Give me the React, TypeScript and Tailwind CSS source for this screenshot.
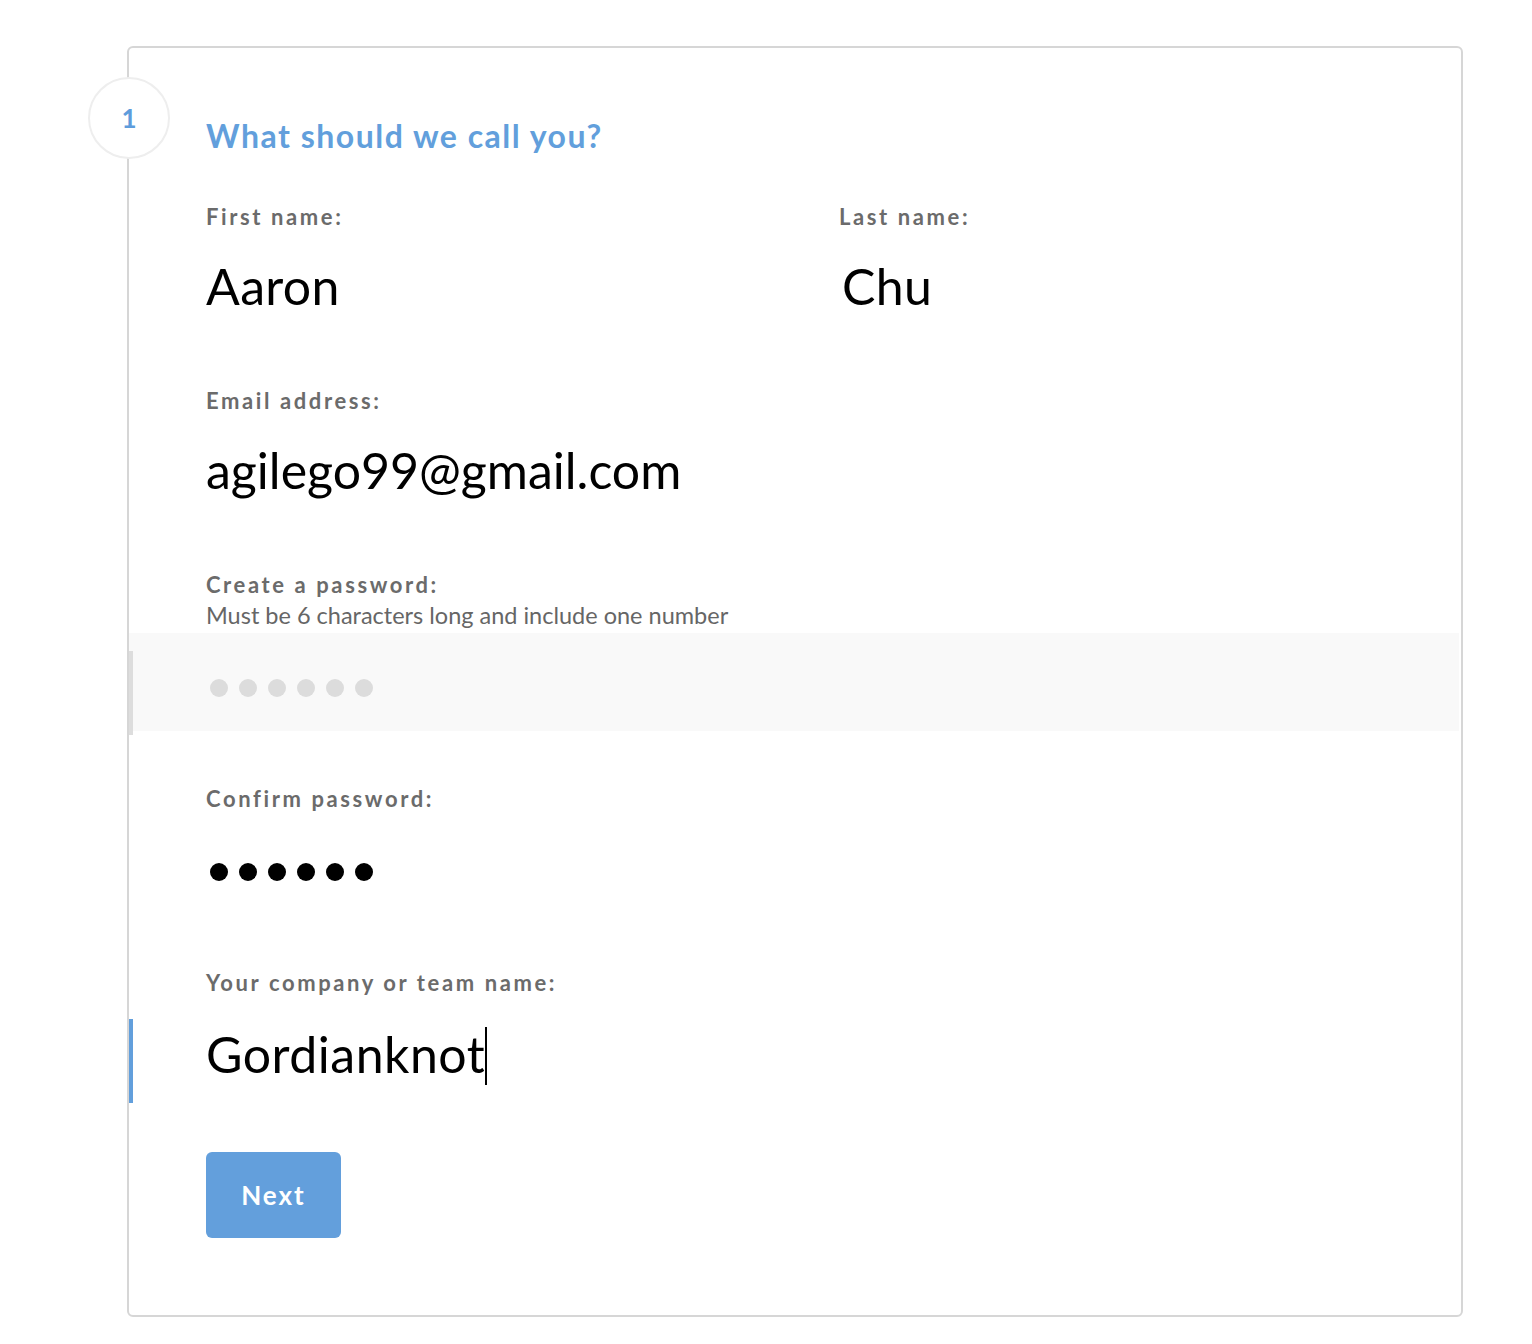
import React from "react";

const font = { fontFamily: "Lato, 'Noto Sans', sans-serif" };

function Label({ children }: { children: React.ReactNode }) {
  return (
    <div className="h-[24px] text-[22px] leading-[24px] font-bold tracking-[2.6px] text-[#6b6b6b]">
      {children}
    </div>
  );
}

function Dots({ color }: { color: string }) {
  return (
    <div className="flex gap-[11px] pl-[4px]">
      {[0, 1, 2, 3, 4, 5].map((i) => (
        <span key={i} className={`block h-[18px] w-[18px] rounded-full ${color}`} />
      ))}
    </div>
  );
}

export default function App() {
  return (
    <div className="min-h-[1344px] bg-white pt-[46px] pl-[127px]" style={font}>
      <div className="relative w-[1336px] h-[1271px] rounded-[6px] border-2 border-[#d6d6d6] bg-white pt-[68px]">
        <div className="absolute left-[-41px] top-[29px] flex h-[82px] w-[82px] items-center justify-center rounded-full border-2 border-[#eeeeee] bg-white text-[26px] font-bold text-[#5e9cdc]">
          1
        </div>

        <div className="pl-[77px] h-[40px] text-[32px] leading-[40px] font-bold tracking-[1.5px] text-[#629fdc]">
          What should we call you?
        </div>

        <div className="mt-[49px] grid grid-cols-[633px_1fr] pl-[77px]">
          <div>
            <Label>First name:</Label>
            <div className="mt-[24px] h-[84px] pt-[8px] text-[50px] leading-none tracking-[0.3px] text-black">Aaron</div>
          </div>
          <div>
            <Label>Last name:</Label>
            <div className="mt-[24px] h-[84px] pt-[8px] pl-[3px] text-[50px] leading-none tracking-[0.3px] text-black">Chu</div>
          </div>
        </div>

        <div className="mt-[52px] pl-[77px]">
          <Label>Email address:</Label>
          <div className="mt-[24px] h-[84px] pt-[8px] text-[50px] leading-none text-black">
            agilego99@gmail.com
          </div>
        </div>

        <div className="mt-[52px] pl-[77px]">
          <Label>Create a password:</Label>
          <div className="mt-[6px] h-[24px] text-[23.5px] leading-[24px] text-[#666666]">
            Must be 6 characters long and include one number
          </div>
        </div>
        <div className="relative mt-[6px] h-[98px] mr-[2px] bg-[#f9f9f9] pl-[77px] pt-[46px]">
          <div className="absolute left-0 top-[18px] h-[84px] w-[4px] bg-[#dddddd]" />
          <Dots color="bg-[#dcdcdc]" />
        </div>

        <div className="mt-[56px] pl-[77px]">
          <Label>Confirm password:</Label>
          <div className="mt-[24px] h-[84px] pt-[28px]">
            <Dots color="bg-black" />
          </div>
        </div>

        <div className="relative mt-[52px]">
          <div className="pl-[77px]">
            <Label>Your company or team name:</Label>
          </div>
          <div className="relative mt-[24px] h-[84px] pl-[77px] pt-[8px]">
            <div className="absolute left-0 top-0 h-[84px] w-[4px] bg-[#629fdc]" />
            <span className="text-[50px] leading-none tracking-[0.5px] text-black">Gordianknot</span>
            <span className="inline-block h-[58px] w-[2px] bg-black align-[-12px]" />
          </div>
        </div>

        <div className="mt-[49px] pl-[77px]">
          <button className="h-[86px] w-[135px] rounded-[6px] bg-[#639fdc] text-[26px] font-bold tracking-[2px] text-white" style={font}>
            Next
          </button>
        </div>
      </div>
    </div>
  );
}
